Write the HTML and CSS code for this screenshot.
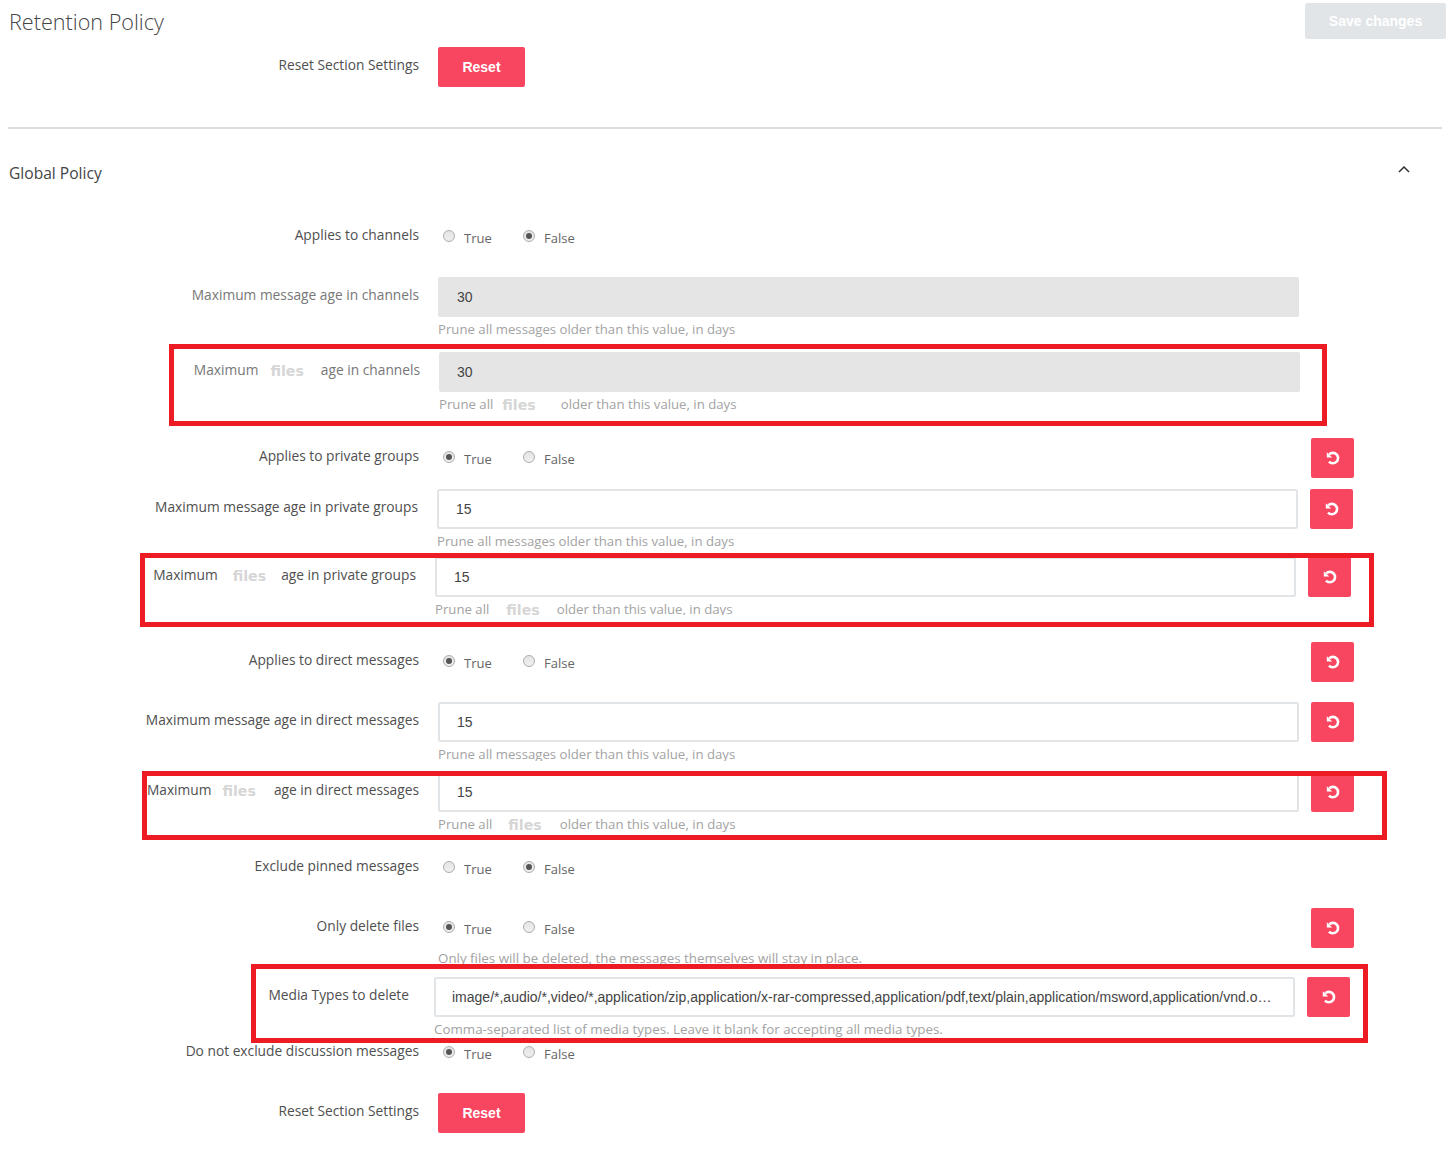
FILE: index.html
```html
<!DOCTYPE html>
<html lang="en">
<head>
<meta charset="utf-8">
<title>Retention Policy</title>
<link rel="stylesheet" href="styles.css">
</head>
<body>
<svg class="defs" width="0" height="0" aria-hidden="true">
  <symbol id="undo" viewBox="0 0 14 14">
    <path d="M3.2 3.4A5.2 5.2 0 1 1 3 10.6" fill="none" stroke="currentColor" stroke-width="2.6"/>
    <path d="M0.8 1.2V6.6H6.2Z" fill="currentColor"/>
  </symbol>
</svg>
<main class="page">
  <header class="top">
    <h1 class="title">Retention Policy</h1>
    <button class="save">Save changes</button>
  </header>

  <div class="row mt-8">
    <div class="label">Reset Section Settings</div>
    <div class="field"><button class="reset-btn">Reset</button></div>
  </div>

  <hr class="rule">

  <div class="section-head">
    <h2 class="section-title">Global Policy</h2>
    <svg class="chevron" viewBox="0 0 12 7" width="12" height="7"><path d="M1 6L6 1L11 6" fill="none" stroke="#333" stroke-width="1.5"/></svg>
  </div>

  <div class="row mt-top">
    <div class="label">Applies to channels</div>
    <div class="radios">
      <label class="option"><span class="radio"></span><span>True</span></label>
      <label class="option"><span class="radio on"></span><span>False</span></label>
    </div>
  </div>

  <div class="row mt-20 tall">
    <div class="label muted">Maximum message age in channels</div>
    <div class="field">
      <div class="input disabled">30</div>
      <div class="hint">Prune all messages older than this value, in days</div>
    </div>
  </div>

  <div class="row mt-11 tall shift-r1">
    <div class="label muted">Maximum<span class="files f1">files</span>age in channels</div>
    <div class="field">
      <div class="input disabled tight">30</div>
      <div class="hint">Prune all<span class="files f2">files</span>older than this value, in days</div>
    </div>
  </div>

  <div class="row mt-22">
    <div class="label">Applies to private groups</div>
    <div class="radios">
      <label class="option"><span class="radio on"></span><span>True</span></label>
      <label class="option"><span class="radio"></span><span>False</span></label>
    </div>
    <button class="undo"><svg width="14" height="14"><use href="#undo"/></svg></button>
  </div>

  <div class="row mt-11 tall shift-l1">
    <div class="label">Maximum message age in private groups</div>
    <div class="field">
      <div class="input">15</div>
      <div class="hint">Prune all messages older than this value, in days</div>
    </div>
    <button class="undo"><svg width="14" height="14"><use href="#undo"/></svg></button>
  </div>

  <div class="row mt-4 clip-58 shift-l3">
    <div class="label">Maximum<span class="files f3">files</span>age in private groups</div>
    <div class="field">
      <div class="input">15</div>
      <div class="hint">Prune all<span class="files f4">files</span>older than this value, in days</div>
    </div>
    <button class="undo"><svg width="14" height="14"><use href="#undo"/></svg></button>
  </div>

  <div class="row mt-27">
    <div class="label">Applies to direct messages</div>
    <div class="radios">
      <label class="option"><span class="radio on"></span><span>True</span></label>
      <label class="option"><span class="radio"></span><span>False</span></label>
    </div>
    <button class="undo"><svg width="14" height="14"><use href="#undo"/></svg></button>
  </div>

  <div class="row mt-20 clip-59">
    <div class="label">Maximum message age in direct messages</div>
    <div class="field">
      <div class="input">15</div>
      <div class="hint">Prune all messages older than this value, in days</div>
    </div>
    <button class="undo"><svg width="14" height="14"><use href="#undo"/></svg></button>
  </div>

  <div class="row mt-11 tall">
    <div class="label">Maximum<span class="files f5">files</span>age in direct messages</div>
    <div class="field">
      <div class="input">15</div>
      <div class="hint">Prune all<span class="files f6">files</span>older than this value, in days</div>
    </div>
    <button class="undo"><svg width="14" height="14"><use href="#undo"/></svg></button>
  </div>

  <div class="row mt-12">
    <div class="label">Exclude pinned messages</div>
    <div class="radios">
      <label class="option"><span class="radio"></span><span>True</span></label>
      <label class="option"><span class="radio on"></span><span>False</span></label>
    </div>
  </div>

  <div class="row mt-20 clip-57">
    <div class="label">Only delete files</div>
    <div class="field">
      <div class="radios">
        <label class="option"><span class="radio on"></span><span>True</span></label>
        <label class="option"><span class="radio"></span><span>False</span></label>
      </div>
      <div class="hint hint-wide hint-raised">Only files will be deleted, the messages themselves will stay in place.</div>
    </div>
    <button class="undo"><svg width="14" height="14"><use href="#undo"/></svg></button>
  </div>

  <div class="row mt-12 short shift-l4">
    <div class="label media-label">Media Types to delete</div>
    <div class="field">
      <div class="input tight">image/*,audio/*,video/*,application/zip,application/x-rar-compressed,application/pdf,text/plain,application/msword,application/vnd.openxmlformats-officedocument</div>
      <div class="hint hint-wide">Comma-separated list of media types. Leave it blank for accepting all media types.</div>
    </div>
    <button class="undo"><svg width="14" height="14"><use href="#undo"/></svg></button>
  </div>

  <div class="row">
    <div class="label">Do not exclude discussion messages</div>
    <div class="radios">
      <label class="option"><span class="radio on"></span><span>True</span></label>
      <label class="option"><span class="radio"></span><span>False</span></label>
    </div>
  </div>

  <div class="row mt-20">
    <div class="label">Reset Section Settings</div>
    <div class="field"><button class="reset-btn">Reset</button></div>
  </div>

  <div class="mark mark-1"></div>
  <div class="mark mark-2"></div>
  <div class="mark mark-3"></div>
  <div class="mark mark-4"></div>
</main>
</body>
</html>
```
FILE: styles.css
```css
* { box-sizing: border-box; }
html, body { margin: 0; padding: 0; background: #fff; }
body { font-family: "Open Sans", "Noto Sans", sans-serif; font-size: 13.2px; color: #555; }
.defs { position: absolute; }
.page { position: relative; width: 1453px; height: 1170px; overflow: hidden; }

.top { display: flex; justify-content: space-between; align-items: center; width: 1446px; padding: 3px 0 0 9px; }
.title { margin: 0; font-size: 21.6px; font-weight: 300; color: #444; line-height: 36px; position: relative; top: 1px; }
.save { width: 141px; height: 36px; border: 0; border-radius: 2px; background: #e1e5e8; color: #fff; font: 700 14px "Liberation Sans", sans-serif; }

.row { display: grid; grid-template-columns: 419px 880px 55px; height: 40px; }
.tall { height: 64px; }
.short { height: 56px; }
.clip-58 { height: 58px; overflow: hidden; }
.clip-59 { height: 59px; overflow: hidden; }
.clip-57 { height: 57px; overflow: hidden; }

.mt-4 { margin-top: 4px; }
.mt-8 { margin-top: 8px; }
.mt-11 { margin-top: 11px; }
.mt-12 { margin-top: 12px; }
.mt-20 { margin-top: 20px; }
.mt-22 { margin-top: 22px; }
.mt-27 { margin-top: 27px; }
.mt-top { margin-top: 28px; }

.shift-r1 { margin-left: 1px; }
.shift-l1 { margin-left: -1px; }
.shift-l3 { margin-left: -3px; }
.shift-l4 { margin-left: -4px; }

.label { text-align: right; font-size: 13.75px; font-weight: 500; line-height: 20px; padding-top: 8px; white-space: nowrap; color: #4f4f4f; }
.label.muted { color: #777; }
.media-label { padding-right: 6px; }

.field { margin-left: 19px; width: 861px; }
.row > .radios { margin-left: 19px; }
.undo { grid-column: 3; margin-left: 12px; width: 43px; height: 40px; border: 0; border-radius: 2px; background: #f84660; color: #fff; padding: 0; display: flex; align-items: center; justify-content: center; }

.input { height: 40px; border: 2px solid #e1e5e8; border-radius: 2px; background: #fff; padding: 0 16px 0 17px; font: 14px/37px "Liberation Sans", sans-serif; color: #444; white-space: nowrap; overflow: hidden; text-overflow: ellipsis; }
.input.tight { padding-left: 16px; }
.input.disabled { background: #e5e5e5; border-color: #e5e5e5; }
.hint { color: #a3a3a3; line-height: 24px; white-space: nowrap; }
.hint-wide { font-size: 13.35px; }
.hint-raised { margin-top: -2px; }

.files { font: 700 14.2px "DejaVu Sans", sans-serif; color: #d6d6d6; position: relative; top: 1px; }
.label .f1 { margin: 0 17px 0 12px; }
.label .f3 { margin: 0 15px 0 15px; }
.label .f5 { margin: 0 18px 0 11px; }
.hint .f2 { margin: 0 25px 0 9px; }
.hint .f4 { margin: 0 17px 0 17px; }
.hint .f6 { margin: 0 18px 0 16px; }

.radios { display: flex; padding: 13px 0 0 5px; height: 40px; }
.option { display: flex; width: 80px; height: 14px; align-items: flex-start; }
.option > span:last-child { margin-left: 9px; font-size: 13px; line-height: 18px; margin-top: -1px; color: #666; }
.radio { flex: none; width: 12px; height: 12px; border-radius: 50%; border: 1px solid #adadad; background: linear-gradient(#e4e4e4, #f0f0f0); position: relative; }
.radio.on::after { content: ""; position: absolute; inset: 2px; border-radius: 50%; background: #555; }

.reset-btn { width: 87px; height: 40px; border: 0; border-radius: 2px; background: #f84660; color: #fff; font: 700 14px "Liberation Sans", sans-serif; }

.rule { margin: 40px 0 0 8px; width: 1434px; height: 2px; border: 0; background: #ddd; }
.section-head { display: flex; justify-content: space-between; align-items: flex-start; width: 1410px; padding: 0 0 0 9px; margin-top: 30px; height: 30px; }
.section-title { margin: 0; font-size: 15.6px; font-weight: 400; line-height: 28px; color: #444; }
.chevron { margin-top: 7px; }

.mark { position: absolute; border: 5px solid #ed1c24; }
.mark-1 { left: 169px; top: 344px; width: 1158px; height: 82px; }
.mark-2 { left: 140px; top: 553px; width: 1234px; height: 74px; }
.mark-3 { left: 142px; top: 771px; width: 1245px; height: 69px; }
.mark-4 { left: 251px; top: 964px; width: 1117px; height: 79px; }
```
